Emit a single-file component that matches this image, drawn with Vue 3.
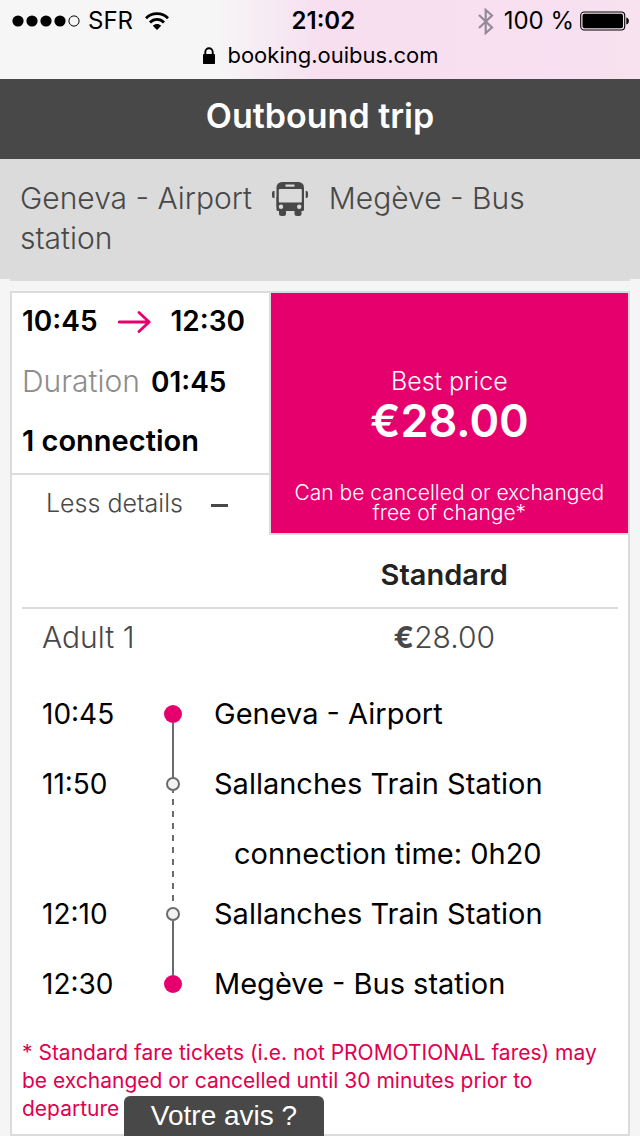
<script setup>
const stops = [
  { time: '10:45', place: 'Geneva - Airport', marker: 'end', above: '', below: 'solid' },
  { time: '11:50', place: 'Sallanches Train Station', marker: 'mid', above: 'solid', below: 'dashed' },
  { time: '', place: 'connection time: 0h20', marker: '', above: 'dashed', below: '', wait: true },
  { time: '12:10', place: 'Sallanches Train Station', marker: 'mid', above: 'dashed', below: 'solid' },
  { time: '12:30', place: 'Megève - Bus station', marker: 'end', above: 'solid', below: '' },
]
</script>

<template>
  <div class="page">
    <header class="browser">
      <div class="status">
        <div class="carrier">
          <svg class="signal" width="68" height="12" viewBox="0 0 68 12" aria-hidden="true">
            <circle cx="6" cy="6" r="5.6" />
            <circle cx="20" cy="6" r="5.6" />
            <circle cx="34" cy="6" r="5.6" />
            <circle cx="48" cy="6" r="5.6" />
            <circle cx="62" cy="6" r="5.1" fill="none" stroke="#000" stroke-width="1" />
          </svg>
          <span>SFR</span>
          <svg width="24" height="18" viewBox="0 0 24 18" aria-hidden="true">
            <g fill="none" stroke="#000" stroke-width="2.8">
              <path d="M1 6.2C7 .2 17 .2 23 6.2" />
              <path d="M5 10.4c4-4 10-4 14 0" />
            </g>
            <path d="M12 18l-4.2-4.3c2.4-2.2 6-2.2 8.400 0z" />
          </svg>
        </div>
        <strong class="clock">21:02</strong>
        <div class="power">
          <svg width="16" height="27" viewBox="0 0 16 27" aria-hidden="true">
            <path d="M1 7l13 12.500-6.300 5.500V2L14 7.500 1 20" fill="none" stroke="#96899a" stroke-width="2.200" />
          </svg>
          <span class="percent">100 %</span>
          <svg width="50" height="20" viewBox="0 0 50 20" aria-hidden="true">
            <rect x=".7" y="1" width="44" height="18" rx="3.500" fill="none" stroke="#000" stroke-width="1.100" />
            <rect x="2.500" y="2.700" width="40.500" height="14.600" rx="2" />
            <path d="M46.300 6.500c3.400.8 3.400 6.200 0 7z" />
          </svg>
        </div>
      </div>
      <div class="address">
        <svg width="12" height="17" viewBox="0 0 12 17" aria-hidden="true">
          <path d="M2.300 8V5a3.700 3.700 0 0 1 7.400 0v3" fill="none" stroke="#000" stroke-width="1.900" />
          <rect x="0" y="7" width="12" height="10" rx=".7" />
        </svg>
        <span>booking.ouibus.com</span>
      </div>
    </header>

    <main>
      <h1 class="title">Outbound trip</h1>
      <h2 class="route">
        Geneva - Airport
        <svg class="bus" width="36" height="34" viewBox="0 0 36 34" role="img" aria-label="to">
          <g fill="#484848">
            <rect x="4.500" y="0" width="27.500" height="29" rx="5.500" />
            <rect x="4.500" y="14" width="27.500" height="15" rx="1.500" />
            <rect x="7" y="26" width="7" height="8" rx="2.500" />
            <rect x="22.500" y="26" width="7" height="8" rx="2.500" />
            <path d="M2.500 9v7h-1Q0 16 0 14v-3q0-2 1.500-2zM33.700 9v7h.8q1.500 0 1.500-2v-3q0-2-1.500-2z" />
          </g>
          <g fill="#dbdbdb">
            <rect x="13.500" y="2.500" width="9" height="2.200" />
            <rect x="6.800" y="7" width="23" height="13.500" rx="1" />
            <circle cx="9" cy="24.700" r="2.200" />
            <circle cx="27.200" cy="24.700" r="2.200" />
          </g>
        </svg>
        Megève - Bus station
      </h2>

      <section class="results">
        <article class="trip">
          <div class="overview">
            <div class="left">
              <div class="facts">
                <p class="hours">
                  <span>10:45</span>
                  <svg width="33" height="24" viewBox="0 0 33 24" role="img" aria-label="to">
                    <path d="M1.300 13H31M21 3.400L31.200 13 21 22.600" fill="none" stroke="#e6006e" stroke-width="2.800" stroke-linecap="round" stroke-linejoin="round" />
                  </svg>
                  <span>12:30</span>
                </p>
                <p><span class="label">Duration</span> 01:45</p>
                <p class="changes">1 connection</p>
              </div>
              <button class="toggle" type="button">
                <span>Less details</span>
                <i class="minus"></i>
              </button>
            </div>
            <button class="offer" type="button">
              <span class="best">Best price</span>
              <span class="price">€28.00</span>
              <span class="terms">Can be cancelled or exchanged free of change*</span>
            </button>
          </div>

          <table class="fares">
            <thead>
              <tr><td></td><th scope="col">Standard</th></tr>
            </thead>
            <tbody>
              <tr><th scope="row">Adult 1</th><td><b>€</b>28.00</td></tr>
            </tbody>
          </table>

          <ol class="stops">
            <li v-for="(stop, i) in stops" :key="i" :class="{ wait: stop.wait }">
              <time>{{ stop.time }}</time>
              <span class="track">
                <i class="line above" :class="stop.above"></i>
                <i v-if="stop.marker" class="dot" :class="stop.marker"></i>
                <i v-if="stop.marker" class="line below" :class="stop.below"></i>
              </span>
              <span class="place">{{ stop.place }}</span>
            </li>
          </ol>

          <p class="note">
            * Standard fare tickets (i.e. not PROMOTIONAL fares) may be exchanged or cancelled until 30 minutes prior to departure
          </p>
        </article>
      </section>
    </main>

    <button class="feedback" type="button">Votre avis ?</button>
  </div>
</template>

<style>
body {
  margin: 0;
  background: #f5f5f5;
}
</style>

<style scoped>
.page {
  font-family: Inter, "Liberation Sans", sans-serif;
  font-size: 28px;
  line-height: 40px;
  color: #000;
}
h1, h2, p, ol {
  margin: 0;
  padding: 0;
}
button {
  font: inherit;
  border: 0;
  padding: 0;
  cursor: pointer;
}
svg {
  flex: none;
}

.browser {
  padding: 4px 10px 7px 12px;
  background: linear-gradient(90deg, #f6f6f6 34%, #f7dff0 50%, #f7e0f1 88%, #f7e2ee);
  font-size: 24px;
  line-height: 34px;
}
.status {
  display: flex;
  justify-content: space-between;
  align-items: center;
}
.carrier {
  display: flex;
  align-items: center;
  gap: 8px;
}
.carrier svg:last-child {
  margin-left: 4px;
}
.clock {
  font-weight: 600;
}
.power {
  display: flex;
  align-items: center;
  gap: 6px;
}
.percent {
  margin-left: 4px;
}
.address {
  display: flex;
  align-items: center;
  justify-content: center;
  gap: 12px;
  font-size: 22px;
}

.title {
  padding: 17px 20px 23px;
  background: #484848;
  color: #fff;
  font-size: 34px;
  font-weight: 600;
  text-align: center;
}
.route {
  padding: 19px 20px 21px;
  background: #dbdbdb;
  color: #484848;
  font-size: 30px;
  font-weight: 300;
}
.bus {
  margin: 0 12px;
  vertical-align: -7px;
}

.results {
  margin: 0 10px;
  padding-top: 10px;
  border-top: 2px solid #dbdbdb;
}
.trip {
  border: 2px solid #dcdcdc;
  background: #fff;
}
.overview {
  display: grid;
  grid-template-columns: 5fr 7fr;
}
.left {
  display: flex;
  flex-direction: column;
}
.facts {
  display: flex;
  flex-direction: column;
  gap: 20px;
  padding: 8px 10px 12px;
  border-bottom: 2px solid #dcdcdc;
  font-weight: 600;
}
.facts p {
  height: 40px;
}
.hours {
  display: flex;
  align-items: center;
  gap: 20px;
}
.label {
  margin-right: 4px;
  color: #8c8c8c;
  font-size: 30px;
  font-weight: 300;
}
.changes {
  font-size: 29px;
}
.toggle {
  flex: 1;
  display: flex;
  align-items: center;
  gap: 28px;
  padding: 0 0 4px 34px;
  background: none;
  color: #484848;
  font-size: 25px;
  font-weight: 300;
}
.minus {
  width: 17px;
  height: 3px;
  margin-top: 4px;
  background: #484848;
}
.offer {
  display: flex;
  flex-direction: column;
  align-items: center;
  padding: 70px 20px 10px;
  border-left: 2px solid #dcdcdc;
  border-bottom: 2px solid #dcdcdc;
  background: #e6006e;
  color: #fff;
}
.best {
  font-size: 25px;
  font-weight: 300;
  line-height: 36px;
}
.price {
  font-size: 45px;
  font-weight: 600;
  line-height: 44px;
}
.terms {
  padding-top: 40px;
  font-size: 21px;
  font-weight: 300;
  line-height: 20px;
}

.fares {
  width: calc(100% - 20px);
  margin: 0 10px;
  border-collapse: collapse;
  table-layout: fixed;
  color: #484848;
  font-size: 30px;
  font-weight: 300;
}
.fares td, .fares th {
  padding: 8px 20px 0;
  text-align: center;
}
.fares th[scope="row"] {
  font-weight: 300;
  text-align: left;
}
.fares thead td, .fares thead th {
  padding: 20px 20px 12px;
  border-bottom: 2px solid #dcdcdc;
}
.fares thead td {
  width: 35%;
}
.fares thead th {
  color: #222;
  font-size: 29px;
  font-weight: 600;
}
.fares b {
  font-weight: 700;
}

.stops {
  padding: 22px 20px 20px 30px;
  list-style: none;
}
.stops li {
  display: grid;
  grid-template-columns: 122px 18px 1fr;
  height: 70px;
  align-items: center;
}
.stops li.wait {
  height: 60px;
}
.track {
  align-self: stretch;
  display: flex;
  flex-direction: column;
  align-items: center;
}
.line {
  flex: 1;
  width: 2px;
}
.solid {
  background: #6a6a6a;
}
.dashed {
  background: linear-gradient(transparent 4px, #6a6a6a 4px, #6a6a6a 10px, transparent 10px) top / 2px 12px;
}
.dashed.below {
  background-position: bottom;
}
.dot {
  box-sizing: border-box;
  border-radius: 50%;
}
.dot.end {
  width: 18px;
  height: 18px;
  background: #e6006e;
}
.dot.mid {
  width: 14px;
  height: 14px;
  border: 2px solid #6a6a6a;
  background: #f2f2f2;
}
.place {
  padding-left: 32px;
  font-size: 29px;
}
.wait .place {
  padding: 10px 0 0 52px;
}

.note {
  padding: 0 10px 11px;
  color: #e1004f;
  font-size: 21px;
  line-height: 28px;
}
.feedback {
  position: fixed;
  bottom: 0;
  left: 124px;
  width: 200px;
  border-radius: 6px 6px 0 0;
  background: #484848;
  color: #fff;
  font-family: "Liberation Sans", Arial, sans-serif;
}
</style>
